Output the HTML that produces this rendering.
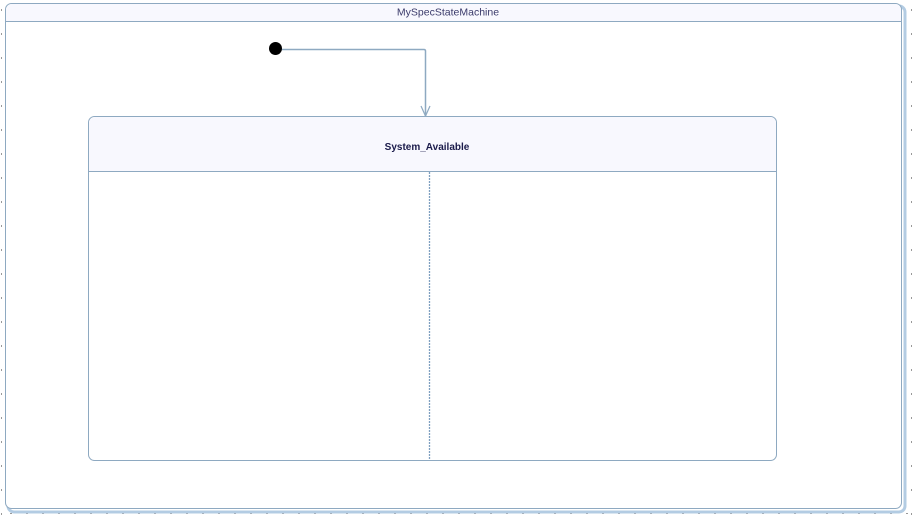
<!DOCTYPE html>
<html><head><meta charset="utf-8"><style>
html,body{margin:0;padding:0;background:#fff;width:912px;height:516px;overflow:hidden}
svg{display:block}
text{font-family:"Liberation Sans",sans-serif}
</style></head><body>
<svg width="912" height="516" viewBox="0 0 912 516" xmlns="http://www.w3.org/2000/svg">
<defs>
<pattern id="dl" x="0" y="0" width="4" height="24" patternUnits="userSpaceOnUse"><rect x="1" y="9" width="1" height="2" fill="#999"/></pattern>
<pattern id="db" x="0" y="0" width="16" height="4" patternUnits="userSpaceOnUse"><rect x="10" y="1" width="2" height="1" fill="#999"/></pattern>
</defs>
<rect x="0" y="0" width="4" height="516" fill="url(#dl)"/>
<rect x="906" y="0" width="6" height="516" fill="url(#dl)" transform="translate(2,0)"/>
<rect x="0" y="512" width="912" height="4" fill="url(#db)"/>
<rect x="8" y="6" width="897" height="506" rx="6" fill="none" stroke="#b3cce3" stroke-width="3"/>
<rect x="5.5" y="3.5" width="896" height="505" rx="6" fill="#fff" stroke="#8ea9c1"/>
<path d="M6 21 V9.5 A6 6 0 0 1 11.5 4 H895.5 A6 6 0 0 1 901 9.5 V21 Z" fill="#f8f8fe"/>
<line x1="6" y1="21.5" x2="901" y2="21.5" stroke="#8ea9c1"/>
<text x="448" y="15.5" font-size="10.5" fill="#3a3a6a" text-anchor="middle">MySpecStateMachine</text>
<circle cx="275.5" cy="48.5" r="6.5" fill="#000"/>
<path d="M282 49.5 H424 Q425.5 49.5 425.5 51 V116" fill="none" stroke="#8ea9c1" stroke-width="1.5"/>
<path d="M421 106 L425.5 116 L430 106" fill="none" stroke="#8ea9c1" stroke-width="1.2"/>
<rect x="88.5" y="116.5" width="688" height="344" rx="6" fill="#fff" stroke="#8ea9c1"/>
<path d="M89 171 V123 A6 6 0 0 1 95 117 H770 A6 6 0 0 1 776 123 V171 Z" fill="#f8f8fe"/>
<line x1="89" y1="171.5" x2="776" y2="171.5" stroke="#8ea9c1"/>
<text x="427" y="150" font-size="10" font-weight="bold" fill="#1a1a4a" text-anchor="middle">System_Available</text>
<line x1="429.5" y1="172" x2="429.5" y2="460" stroke="#7fa0c0" stroke-width="1.3" stroke-dasharray="2,1"/>
</svg>
</body></html>
